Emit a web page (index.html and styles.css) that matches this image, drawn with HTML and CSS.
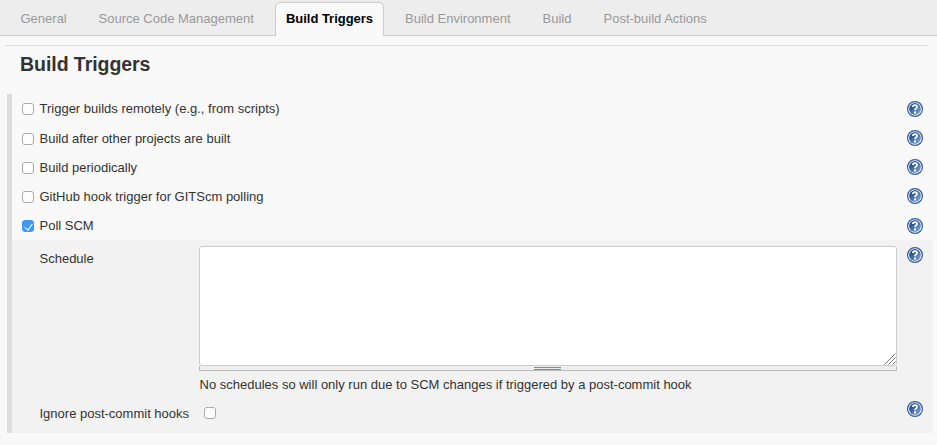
FILE: index.html
```
<!DOCTYPE html>
<html lang="en">
<head>
<meta charset="utf-8">
<title>Build Triggers</title>
<link rel="stylesheet" href="styles.css">
</head>
<body>
<svg class="defs" aria-hidden="true">
  <defs>
    <linearGradient id="blue" x1="0" y1="0" x2="1" y2="1">
      <stop offset="0.3" stop-color="#2b5797"/><stop offset="1" stop-color="#8fb3dc"/>
    </linearGradient>
    <symbol id="help" viewBox="0 0 16 16">
      <circle cx="8" cy="8" r="7.4" fill="#fff" stroke="#30599a" stroke-width="1.2"/>
      <circle cx="8" cy="8" r="5.9" fill="url(#blue)"/>
      <path d="M5.9 6C5.9 3.6 10 3.5 10 5.8C10 7.4 8 7.5 8 9.3" fill="none" stroke="#fff" stroke-width="1.8"/>
      <path d="M7 10.5h2v2h-2z" fill="#fff"/>
    </symbol>
  </defs>
</svg>
<nav class="tabs">
  <a class="tab general">General</a>
  <a class="tab source">Source Code Management</a>
  <a class="tab triggers active">Build Triggers</a>
  <a class="tab environment">Build Environment</a>
  <a class="tab build">Build</a>
  <a class="tab post">Post-build Actions</a>
</nav>
<main>
  <h1>Build Triggers</h1>
  <section class="group">
    <div class="row"><label><input type="checkbox"><span>Trigger builds remotely (e.g., from scripts)</span></label><svg class="help"><use href="#help"/></svg></div>
    <div class="row raised"><label><input type="checkbox"><span>Build after other projects are built</span></label><svg class="help"><use href="#help"/></svg></div>
    <div class="row raised"><label><input type="checkbox"><span>Build periodically</span></label><svg class="help"><use href="#help"/></svg></div>
    <div class="row raised"><label><input type="checkbox"><span>GitHub hook trigger for GITScm polling</span></label><svg class="help"><use href="#help"/></svg></div>
    <div class="row"><label><input type="checkbox" checked><span>Poll SCM</span></label><svg class="help"><use href="#help"/></svg></div>
    <div class="nested">
      <span class="name">Schedule</span>
      <div class="field">
        <div class="area"><svg class="grip" viewBox="0 0 12 12"><path d="M0.5 11.5L11.5 0.5M4.5 11.5L11.5 4.5M8.5 11.5L11.5 8.5" stroke="#777" fill="none"/></svg></div>
        <div class="handle"><i></i></div>
        <p>No schedules so will only run due to SCM changes if triggered by a post-commit hook</p>
      </div>
      <svg class="help"><use href="#help"/></svg>
      <span class="name">Ignore post-commit hooks</span>
      <input class="hooks" type="checkbox">
      <svg class="help last"><use href="#help"/></svg>
    </div>
  </section>
</main>
</body>
</html>
```
FILE: styles.css
```
* { box-sizing: border-box; }
body { margin: 0; height: 445px; overflow: hidden; background: #f9f9f9; color: #333; font: 13px/16px "Liberation Sans", Arial, sans-serif; }
.defs { display: block; width: 0; height: 0; }
.tabs { display: flex; align-items: flex-end; gap: 10px; height: 36px; padding-left: 9px; background: #ededed; border-bottom: 1px solid #ccc; }
.tab { height: 34px; margin-bottom: -1px; padding: 8px 10px 0; border: 1px solid transparent; border-bottom: 0; white-space: nowrap; color: #999; }
.tab.active { border-color: #ccc; border-radius: 5px 5px 0 0; background: #f9f9f9; color: #000; font-weight: bold; letter-spacing: -0.03px; }
.general { width: 69px; padding-left: 10.5px; }
.source { width: 177px; padding-left: 9.5px; }
.triggers { width: 109px; }
.environment { width: 127px; }
.build { width: 51px; padding-left: 10.5px; }
.post { width: 127px; padding-left: 10.5px; }
main { margin: 9px 4px 0 5px; }
h1 { height: 49px; margin: 0 5px 0 0; padding: 6px 0 0 15px; border-top: 1px solid #ddd; font-size: 19.5px; line-height: 24px; letter-spacing: -0.05px; }
.group { margin-left: 2px; height: 339px; border-left: 5px solid #ddd; }
.row { display: flex; justify-content: space-between; align-items: flex-start; height: 29px; padding: 7px 10px 0 10px; }
.row:first-child { height: 30px; }
.row.raised .help { margin-top: -1px; }
.row label { display: flex; align-items: flex-start; gap: 5.5px; height: 16px; }
input { appearance: none; flex: none; width: 12px; height: 12px; margin: 2px 0 0; border: 1px solid #aaa; border-radius: 3px; background: #fff; }
input:checked { border-color: #3b99fc; background: #3b99fc; position: relative; }
input:checked::after { content: ""; position: absolute; left: 3px; top: 1px; width: 4px; height: 7px; border: solid #fff; border-width: 0 1.6px 1.6px 0; transform: rotate(35deg); }
.help { width: 16px; height: 16px; display: block; }
.nested { display: grid; grid-template-columns: 160px 698px 16px; grid-template-rows: 155px 38px; height: 193px; padding-left: 27px; background: #f2f2f2; }
.name { padding: 11px 0 0 0.5px; }
.field { padding-top: 6px; }
.area { position: relative; height: 120px; border: 1px solid #ccc; border-radius: 3px; background: #fff; }
.grip { position: absolute; right: 0; bottom: 0; width: 12px; height: 12px; }
.handle { display: flex; height: 5px; padding-left: 334px; border: solid #bbb; border-width: 0 1px 1px; background: #eee; }
.handle i { width: 27px; height: 3px; margin-top: 1px; border: solid #888; border-width: 1px 0; }
.field p { margin: 6px 0 0; padding-left: 0.5px; }
.nested .help { margin: 7px 0 0 10px; }
.nested .last { margin-top: 6px; }
.hooks { margin: 12px 0 0 5px; }
```
